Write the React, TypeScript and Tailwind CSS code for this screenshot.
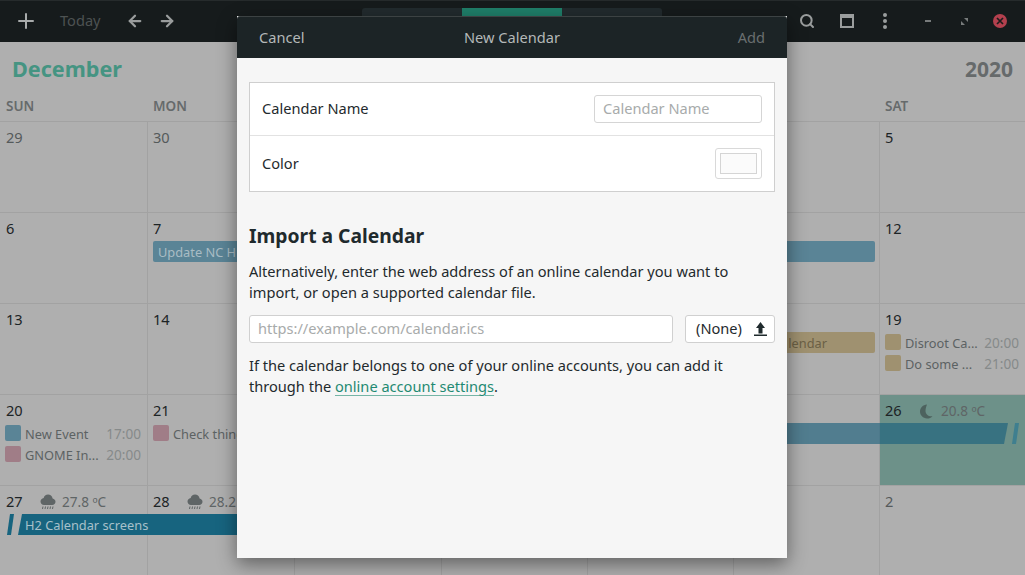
import React from 'react';
import { ArrowLeft, ArrowRight, Plus, Search } from 'lucide-react';

type Dot = { color: string; title: string; time: string };

// one full-height cell per column, so the bars can sit on top of them in the same grid
const colClass = ['col-start-1', 'col-start-2', 'col-start-3', 'col-start-4', 'col-start-5', 'col-start-6', 'col-start-7'];
const monthCols = 'grid-cols-[147px_147px_147px_146px_146px_146px_146px]';

const CloudRain = () => (
  <svg width="16" height="16" viewBox="0 0 16 16" className="shrink-0">
    <path d="M8 0.500c-2.200 0-3.900 1.500-4.300 3.400C1.900 4.200 0.500 5.600 0.500 7.400c0 1.900 1.600 3.600 3.500 3.600h8.200c1.800 0 3.300-1.500 3.300-3.300 0-1.700-1.200-3-2.900-3.300C12.200 2.200 10.300 0.500 8 0.500z" fill="#5f6566" />
    <path d="M3 12.500l-.5 2.500M5.500 12.500l-.5 2.500M8 12.500l-.5 2.500M10.500 12.500l-.5 2.500M13 12.500l-.5 2.500" stroke="#5f6566" strokeWidth="1" />
  </svg>
);

const Moon = () => (
  <svg width="14" height="15" viewBox="0 0 14 15" className="shrink-0 mr-[2px]">
    <path d="M8 0.500C4 0.800 1 3.800 1 7.500s3 6.800 7 7c2.200 0 4.200-.9 5.500-2.300-3.800.6-7-1.800-7-5.200 0-2.800 1-5 1.500-6.500z" fill="#4d625e" />
  </svg>
);

const DayCell = ({
  col,
  day,
  muted,
  today,
  weather,
  dots,
}: {
  col: number;
  day: number;
  muted?: boolean;
  today?: boolean;
  weather?: React.ReactNode;
  dots?: Dot[];
}) => (
  <div
    className={`${colClass[col]} row-start-1 row-span-3 pt-[6px] flex flex-col min-w-0 ${col === 0 ? '' : 'border-l border-[#a2a2a2]'} ${today ? 'bg-[#6d9189]' : ''}`}
  >
    <div className={`flex items-center h-[20px] gap-[18px] ${col === 0 ? 'pl-[6px]' : 'pl-[5px]'}`}>
      <span className={`text-[14.6px] w-[16px] ${muted ? 'text-[#555a5b]' : 'text-[#1d2426]'}`}>{day}</span>
      {weather}
    </div>
    {dots && (
      <div className="mt-[4px] flex flex-col gap-[5px] pl-[5px] pr-[6px]">
        {dots.map((d) => (
          <div key={d.title} className="flex items-center h-[16px]">
            <span className="w-[16px] h-[16px] rounded-[2px] shrink-0" style={{ backgroundColor: d.color }} />
            <span className="ml-[4px] pt-[3px] flex-1 whitespace-nowrap overflow-hidden text-[12.8px] text-[#5c6263]">{d.title}</span>
            <span className="pt-[3px] text-[13.6px] text-[#868a8a] ml-1">{d.time}</span>
          </div>
        ))}
      </div>
    )}
  </div>
);

const Temp = ({ children }: { children: React.ReactNode }) => (
  <span className="text-[13.6px] pt-[1px] ml-[-12px] text-[#5f6566] whitespace-nowrap">{children}</span>
);

const WeekRow = ({ children }: { children: React.ReactNode }) => (
  <div className={`grid ${monthCols} grid-rows-[28px_21px_1fr] h-[91px] border-b border-[#a2a2a2]`}>{children}</div>
);

export default function App() {
  return (
    <div className="relative w-[1025px] h-[575px] overflow-hidden bg-[#afafaf] font-['Noto_Sans',sans-serif] text-[14.6px]">
      {/* header bar */}
      <div className="h-[42px] bg-[#161b1c] border-t border-[#262b2c] pb-[1px] flex items-center text-[#9a9d9d]">
        <Plus size={24} strokeWidth={2} className="ml-[14px] text-[#a8abab]" />
        <span className="ml-[22px] w-[41px] whitespace-nowrap text-[#4d5252]">Today</span>
        <ArrowLeft size={18} strokeWidth={3} className="ml-[25px]" />
        <ArrowRight size={18} strokeWidth={3} className="ml-[14px]" />
        <div className="ml-[186px] self-start mt-[7px] flex w-[300px] h-[9px] rounded-t-[3px] overflow-hidden">
          <div className="w-[100px] bg-[#222b2e] flex items-end pl-[61px]">
            <span className="w-[2px] h-[1px] bg-[#7c8080]" />
          </div>
          <div className="w-[100px] bg-[#1f7f6a] flex items-end pl-[65px]">
            <span className="w-[2px] h-[1px] bg-[#a9cfc5]" />
          </div>
          <div className="w-[100px] bg-[#222b2e]" />
        </div>
        <Search size={16} strokeWidth={3} className="ml-[137px]" />
        <div className="ml-[25px] w-[14px] h-[14px] border-2 border-t-4 border-[#9a9d9d]" />
        <div className="ml-[29px] flex flex-col gap-[2px]">
          <span className="w-[4px] h-[4px] rounded-full bg-[#9a9d9d]" />
          <span className="w-[4px] h-[4px] rounded-full bg-[#9a9d9d]" />
          <span className="w-[4px] h-[4px] rounded-full bg-[#9a9d9d]" />
        </div>
        <span className="ml-[38px] w-[6px] h-[2px] bg-[#777b7b]" />
        <svg width="7" height="7" viewBox="0 0 7 7" className="ml-[30px]">
          <path d="M7 0v4L3 0zM0 7V3l4 4z" fill="#777b7b" />
        </svg>
        <span className="ml-[25px] w-[14px] h-[14px] rounded-full bg-[#b3404e] flex items-center justify-center">
          <svg width="8" height="8" viewBox="0 0 8 8">
            <path d="M1 1l6 6M7 1l-6 6" stroke="#1c1c1c" strokeWidth="1.700" />
          </svg>
        </span>
      </div>

      {/* month and year */}
      <div className="h-[46px] flex items-center justify-between pl-[12px] pr-[12px] pt-[7px] text-[21.6px] leading-none font-bold">
        <span className="text-[#459482]">December</span>
        <span className="text-[21px] pt-[1px] text-[#666a6b]">2020</span>
      </div>

      {/* weekdays */}
      <div className={`grid ${monthCols} h-[34px] items-center pt-[4px] border-b border-[#a2a2a2] text-[13.5px] font-semibold text-[#666a6b]`}>
        {['SUN', 'MON', 'TUE', 'WED', 'THU', 'FRI', 'SAT'].map((d) => (
          <span key={d} className="pl-[6px]">{d}</span>
        ))}
      </div>

      <WeekRow>
        <DayCell col={0} muted day={29} />
        <DayCell col={1} muted day={30} />
        <DayCell col={2} day={1} />
        <DayCell col={3} day={2} />
        <DayCell col={4} day={3} />
        <DayCell col={5} day={4} />
        <DayCell col={6} day={5} />
      </WeekRow>

      <WeekRow>
        <DayCell col={0} day={6} />
        <DayCell col={1} day={7} />
        <DayCell col={2} day={8} />
        <DayCell col={3} day={9} />
        <DayCell col={4} day={10} />
        <DayCell col={5} day={11} />
        <DayCell col={6} day={12} />
        <div className="row-start-2 col-start-2 col-span-5 ml-[6px] mr-[4px] rounded-[2px] bg-[#5a8496] text-[#a9bcc4] text-[12.8px] leading-[20px] pt-[1px] pl-[5px] z-10">
          Update NC H
        </div>
      </WeekRow>

      <WeekRow>
        <DayCell col={0} day={13} />
        <DayCell col={1} day={14} />
        <DayCell col={2} day={15} />
        <DayCell col={3} day={16} />
        <DayCell col={4} day={17} />
        <DayCell col={5} day={18} />
        <DayCell
          col={6}
          day={19}
          dots={[
            { color: '#9f9170', title: 'Disroot Ca...', time: '20:00' },
            { color: '#9f9170', title: 'Do some ...', time: '21:00' },
          ]}
        />
        <div className="row-start-2 col-start-5 col-span-2 mr-[4px] rounded-[2px] bg-[#9f9170] text-[#6b6045] text-[12.8px] leading-[20px] pt-[1px] text-right pr-[48px] z-10">
          lendar
        </div>
      </WeekRow>

      <WeekRow>
        <DayCell
          col={0}
          day={20}
          dots={[
            { color: '#5a8496', title: 'New Event', time: '17:00' },
            { color: '#a07d87', title: 'GNOME In...', time: '20:00' },
          ]}
        />
        <DayCell col={1} day={21} dots={[{ color: '#a07d87', title: 'Check things', time: '' }]} />
        <DayCell col={2} day={22} />
        <DayCell col={3} day={23} />
        <DayCell col={4} day={24} />
        <DayCell col={5} day={25} />
        <DayCell
          col={6}
          today
          day={26}
          weather={
            <>
              <Moon />
              <Temp>20.8 ºC</Temp>
            </>
          }
        />
        <div className="row-start-2 col-start-5 col-span-3 z-10 mr-[17px] h-[21px] bg-[rgba(25,96,125,0.62)] [clip-path:polygon(0_0,100%_0,calc(100%-4px)_100%,0_100%)]" />
        <svg width="7" height="21" viewBox="0 0 7 21" className="row-start-2 col-start-7 z-10 justify-self-end mr-[6px]">
          <polygon points="3,0 7,0 4,21 0,21" fill="#3f7f8f" />
        </svg>
      </WeekRow>

      {/* last week runs off the bottom of the window */}
      <div className={`grid ${monthCols} grid-rows-[28px_21px_1fr] h-[90px]`}>
        <DayCell
          col={0}
          day={27}
          weather={
            <>
              <CloudRain />
              <Temp>27.8 ºC</Temp>
            </>
          }
        />
        <DayCell
          col={1}
          day={28}
          weather={
            <>
              <CloudRain />
              <Temp>28.2 ºC</Temp>
            </>
          }
        />
        <DayCell col={2} day={29} />
        <DayCell col={3} day={30} />
        <DayCell col={4} day={31} />
        <DayCell col={5} muted day={1} />
        <DayCell col={6} muted day={2} />
        <div className="row-start-2 col-start-1 col-span-3 z-10 flex">
          <svg width="7" height="21" viewBox="0 0 7 21" className="ml-[7px] shrink-0">
            <polygon points="3,0 7,0 4,21 0,21" fill="#17647f" />
          </svg>
          <div className="ml-[4px] flex-1 h-[21px] bg-[#17647f] text-[#a7c0ca] text-[12.8px] leading-[20px] pt-[1px] pl-[7px] [clip-path:polygon(4px_0,100%_0,100%_100%,0_100%)]">
            H2 Calendar screens
          </div>
        </div>
      </div>

      {/* new calendar dialog */}
      <div className="absolute z-20 left-[237px] top-[16px] w-[550px] h-[542px] bg-[#f6f6f6] shadow-[0_6px_18px_rgba(0,0,0,0.45)] flex flex-col">
        <div className="h-[42px] shrink-0 bg-[#1c2426] border-t border-[#3c4243] rounded-t-[3px] grid grid-cols-3 items-center px-[22px]">
          <span className="text-[#b4b8b8]">Cancel</span>
          <span className="text-[#b4b8b8] text-center">New Calendar</span>
          <span className="text-[#6a6f70] text-right">Add</span>
        </div>
        <div className="px-[12px] pt-[24px] text-[#1f2a2d]">
          <div className="bg-white border border-[#cfcfcf]">
            <div className="h-[53px] flex items-center justify-between px-[12px] border-b border-[#e2e2e2]">
              <span>Calendar Name</span>
              <div className="w-[168px] h-[28px] border border-[#d5d5d5] rounded-[3px] pl-[8px] leading-[25px] text-[#a8abab]">
                Calendar Name
              </div>
            </div>
            <div className="h-[55px] flex items-center justify-between px-[12px]">
              <span>Color</span>
              <div className="w-[47px] h-[31px] border border-[#d9d9d9] rounded-[3px] p-[4px]">
                <div className="w-full h-full border border-[#d5d5d5] bg-[#fbfbfb]" />
              </div>
            </div>
          </div>
          <h2 className="mt-[30px] text-[19.3px] leading-[28px] font-bold text-[#1f2a2d]">Import a Calendar</h2>
          <p className="mt-[11px] leading-[21px]">
            Alternatively, enter the web address of an online calendar you want to
            <br />
            import, or open a supported calendar file.
          </p>
          <div className="mt-[12px] flex gap-[12px]">
            <div className="flex-1 h-[28px] bg-white border border-[#d0d0d0] rounded-[3px] pl-[8px] leading-[25px] text-[#a8abab]">
              https://example.com/calendar.ics
            </div>
            <div className="w-[90px] h-[28px] bg-white border border-[#d0d0d0] rounded-[3px] flex items-center justify-between pl-[10px] pr-[7px]">
              <span>(None)</span>
              <svg width="13" height="14" viewBox="0 0 13 14">
                <path d="M6.500 0L11 6H8.500V11.500H4.500V6H2z" fill="#1f2a2d" />
                <rect x="0" y="12.500" width="13" height="1.500" fill="#1f2a2d" />
              </svg>
            </div>
          </div>
          <p className="mt-[12px] leading-[21px]">
            If the calendar belongs to one of your online accounts, you can add it
            <br />
            through the{' '}
            <span className="text-[#1f8a72] underline decoration-[#1f8a72]/60 underline-offset-[3px]">online account settings</span>.
          </p>
        </div>
      </div>
    </div>
  );
}
